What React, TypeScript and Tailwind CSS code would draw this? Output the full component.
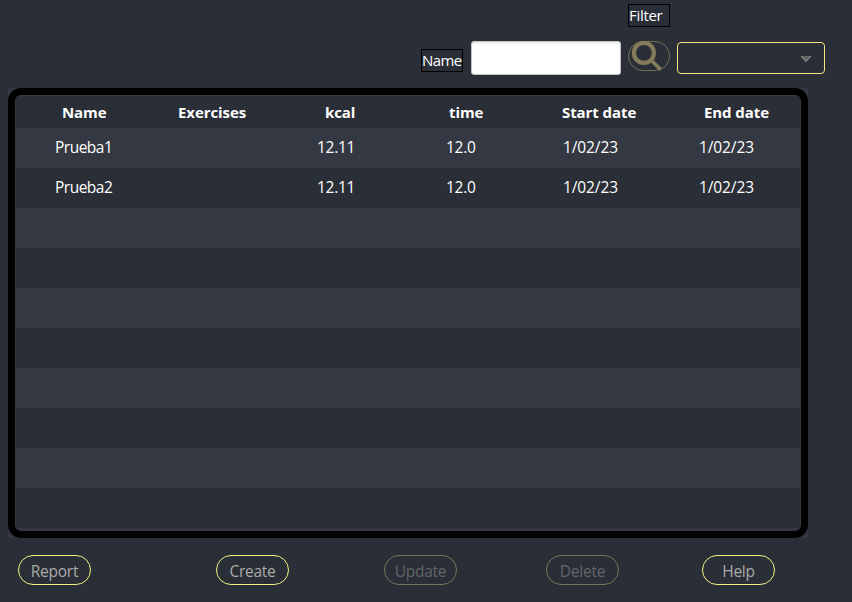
const headers = ["Name", "Exercises", "kcal", "time", "Start date", "End date"];
const rows = [
  ["Prueba1", "", "12.11", "12.0", "1/02/23", "1/02/23"],
  ["Prueba2", "", "12.11", "12.0", "1/02/23", "1/02/23"],
  [], [], [], [], [], [], [], [],
];
const buttons = [
  { label: "Report", place: "ml-[18px]", enabled: true },
  { label: "Create", place: "ml-[125px]", enabled: true },
  { label: "Update", place: "ml-[95px]", enabled: false },
  { label: "Delete", place: "ml-[89px]", enabled: false },
  { label: "Help", place: "ml-[83px]", enabled: true },
];

function SearchButton() {
  return (
    <button className="ml-[7px] block h-[32px] w-[42px] shrink-0">
      <svg width="42" height="32" viewBox="0 0 42 32" fill="none">
        <rect x="0.5" y="0.5" width="41" height="29" rx="14.5" stroke="#6f7054" />
        <circle cx="15.9" cy="11.9" r="10" stroke="#837b5a" strokeWidth="4.2" />
        <path d="M23 19 L32.7 28.7" stroke="#837b5a" strokeWidth="3.8" />
      </svg>
    </button>
  );
}

export default function App() {
  return (
    <div className="flex h-[602px] w-[852px] flex-col overflow-hidden bg-[#2a2e36] font-['Open_Sans','Noto_Sans',sans-serif] text-[15px] text-white">
      <div className="flex h-[41px] pt-[4px] pl-[628px]">
        <span className="h-[23px] w-[42px] border border-black text-[15px] leading-[20px] tracking-[-0.3px]">Filter</span>
      </div>
      <div className="flex h-[47px] items-start pl-[421px]">
        <label className="mt-[8px] h-[23px] w-[42px] shrink-0 border border-black text-[15px] leading-[20px] tracking-[-0.6px]">Name</label>
        <input className="ml-[8px] h-[34px] w-[150px] shrink-0 rounded-[3px] border border-[#c4c4c4] bg-white shadow-[inset_0_2px_2px_#eeeeee] outline-none" />
        <SearchButton />
        <button className="mt-[1px] ml-[7px] flex h-[32px] w-[148px] shrink-0 items-center justify-end rounded-[4px] border border-[#f6e67e] pr-[12px]">
          <svg className="mt-[2px]" width="12" height="8" viewBox="0 0 12 8">
            <path d="M1 1 H11 L6 6.5 Z" fill="#626365" />
            <path d="M1 1 L6 6.5 L11 1" fill="none" stroke="#a5a5a5" />
          </svg>
        </button>
      </div>
      <div className="ml-[8px] h-[450px] w-[800px] shrink-0 bg-[#343842]">
        <div className="h-full overflow-hidden rounded-[13px] border-[7px] border-black bg-[#343842] pt-px pr-px pl-px">
          <div className="grid h-[32px] grid-cols-[116px_147px_124px_113px_142px_96px] bg-[#2a2e36] pl-[46px] text-[15px] leading-[32px] font-bold tracking-[-0.08px] whitespace-nowrap">
            {headers.map((h) => <span key={h}>{h}</span>)}
          </div>
          {rows.map((cells, i) => (
            <div key={i} className={`grid h-[40px] grid-cols-[116px_146px_129px_117px_136px_100px] pl-[39px] text-[15.5px] leading-[38px] tracking-[-0.3px] whitespace-nowrap ${i % 2 ? "bg-[#2a2e36]" : "bg-[#343842]"}`}>
              {cells.map((c, j) => <span key={j} className={j === 0 ? "tracking-[-0.5px]" : j > 3 ? "tracking-[-0.1px]" : ""}>{c}</span>)}
            </div>
          ))}
        </div>
      </div>
      <div className="flex pt-[17px]">
        {buttons.map((b) => (
          <button key={b.label} className={`h-[30px] w-[73px] shrink-0 rounded-full border pt-[2px] text-[15.5px] leading-[27px] tracking-[-0.25px] ${b.place} ${b.enabled ? "border-[#f4f184] text-[#aaaaaa]" : "border-[#77795a] text-[#62646a]"}`}>
            {b.label}
          </button>
        ))}
      </div>
    </div>
  );
}
